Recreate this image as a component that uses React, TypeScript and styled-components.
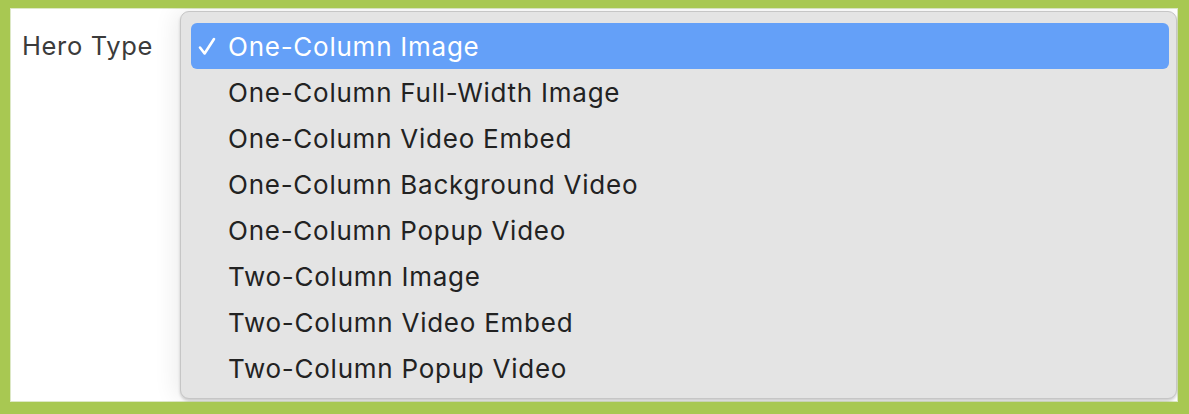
import styled, { createGlobalStyle } from "styled-components";

const GlobalStyle = createGlobalStyle`
  html, body {
    margin: 0;
    padding: 0;
    background: #ffffff;
  }
  body {
    font-family: Inter, "Noto Sans", "Liberation Sans", sans-serif;
  }
`;

const Frame = styled.div`
  box-sizing: border-box;
  width: 1189px;
  height: 414px;
  border-style: solid;
  border-color: #a8c852;
  border-width: 8px 11px 12px 10px;
  box-shadow: inset 0 0 0 1px #dde8c6;
  background: #ffffff;
  display: flex;
  align-items: flex-start;
  padding: 3px 0 0 12px;
  overflow: hidden;
`;

const Label = styled.div`
  width: 158px;
  margin-top: 12px;
  line-height: 46px;
  font-size: 25.5px;
  color: #3b3b3b;
  letter-spacing: 0.65px;
`;

const Menu = styled.ul`
  list-style: none;
  margin: 0;
  box-sizing: border-box;
  width: 997px;
  height: 388px;
  padding: 11px 7px 8px 10px;
  background: #e4e4e4;
  border: 1px solid #c6c6c6;
  border-radius: 9px;
  box-shadow: 0 2px 3px rgba(0, 0, 0, 0.18), -6px 0 22px rgba(0, 0, 0, 0.07);
`;

const Item = styled.li<{ $selected?: boolean }>`
  display: flex;
  align-items: center;
  height: 46px;
  border-radius: 6px;
  font-size: 26px;
  letter-spacing: 0.75px;
  color: ${({ $selected }) => ($selected ? "#ffffff" : "#222222")};
  background: ${({ $selected }) => ($selected ? "#64a0f8" : "transparent")};
`;

const Check = styled.span`
  width: 37px;
  display: flex;
  justify-content: flex-start;
  padding-left: 7px;
  box-sizing: border-box;
`;

const options = [
  "One-Column Image",
  "One-Column Full-Width Image",
  "One-Column Video Embed",
  "One-Column Background Video",
  "One-Column Popup Video",
  "Two-Column Image",
  "Two-Column Video Embed",
  "Two-Column Popup Video",
];

const CheckIcon = () => (
  <svg width="18" height="19" viewBox="0 0 18 19">
    <path d="M2 10.5 L6.6 16.5 L16 2" fill="none" stroke="#ffffff" strokeWidth="2.6" strokeLinecap="round" strokeLinejoin="round" />
  </svg>
);

const App = () => {
  const selected = 0;
  return (
    <>
      <GlobalStyle />
      <Frame>
        <Label>Hero Type</Label>
        <Menu>
          {options.map((o, i) => (
            <Item key={o} $selected={i === selected}>
              <Check>{i === selected && <CheckIcon />}</Check>
              {o}
            </Item>
          ))}
        </Menu>
      </Frame>
    </>
  );
};

export default App;
